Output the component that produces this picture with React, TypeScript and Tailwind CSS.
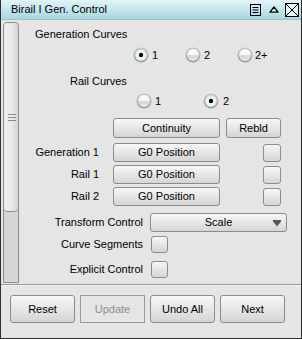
import React from 'react';

const font = { fontFamily: '"Liberation Sans", Arial, sans-serif' };

const Radio = ({ on }: { on?: boolean }) => (
    <svg width="16" height="16" viewBox="0 0 16 16" className="shrink-0">
        <defs>
            <linearGradient id="rRing" x1="0" y1="0" x2="0" y2="1">
                <stop offset="0" stopColor="#c4c4c4" />
                <stop offset="1" stopColor="#9a9a9a" />
            </linearGradient>
            <linearGradient id="rOff" x1="0" y1="0" x2="0" y2="1">
                <stop offset="0" stopColor="#ffffff" />
                <stop offset="0.5" stopColor="#f4f4f4" />
                <stop offset="0.55" stopColor="#d6d6d6" />
                <stop offset="1" stopColor="#e6e6e6" />
            </linearGradient>
            <radialGradient id="rOn" cx="0.5" cy="0.5" r="0.5">
                <stop offset="0" stopColor="#ffffff" />
                <stop offset="0.7" stopColor="#eef6f6" />
                <stop offset="1" stopColor="#c9dcdc" />
            </radialGradient>
        </defs>
        <circle cx="8" cy="8" r="7.5" fill="url(#rRing)" />
        <circle cx="8" cy="8" r="6" fill={on ? 'url(#rOn)' : 'url(#rOff)'} />
        {on && <circle cx="8" cy="8" r="2.2" fill="#000" />}
    </svg>
);

const Btn = ({ children, className = '' }: { children?: React.ReactNode; className?: string }) => (
    <div className={`flex items-center justify-center border border-[#8c8c8c] rounded-[3px] bg-gradient-to-b from-[#f7f7f7] to-[#d5d5d5] text-[11px] text-black leading-none ${className}`}>
        {children}
    </div>
);

const Check = () => <Btn className="w-[17px] h-[17px]" />;

const Row = ({ label, text }: { label: string; text: string }) => (
    <div className="flex items-center h-[19px]">
        <div className="w-[80px] text-right text-[11px]">{label}</div>
        <Btn className="ml-[14px] w-[107px] h-[19px]">{text}</Btn>
        <Btn className="ml-[43px] w-[18px] h-[18px]" />
    </div>
);

export default function App() {
    return (
        <div style={font} className="w-[302px] h-[339px] flex flex-col bg-[#e5e5e5] border-x border-b border-[#303030] text-black overflow-hidden">
            {/* title */}
            <div className="h-[20px] shrink-0 flex items-center bg-gradient-to-b from-[#e2f5f8] to-[#a8d7e1] border-b border-[#9cc4cc]">
                <span className="pl-[10px] text-[11px] flex-1">Birail I Gen. Control</span>
                <svg width="12" height="12" viewBox="0 0 12 12" className="mr-[7px]">
                    <rect x="0.5" y="0.5" width="10" height="11" fill="none" stroke="#000" />
                    <path d="M2.5 3.5h6M2.5 6h6M2.5 8.5h6" stroke="#000" />
                </svg>
                <svg width="10" height="7" viewBox="0 0 10 7" className="mr-[6px]">
                    <path d="M1 6.2 L5 1 L9 6.2 Z" fill="#fff" stroke="#000" strokeWidth="1.3" strokeLinejoin="round" />
                </svg>
                <svg width="14" height="14" viewBox="0 0 14 14" className="mr-[2px]">
                    <rect x="0.5" y="0.5" width="13" height="13" fill="#e8f4f6" stroke="#000" />
                    <path d="M1 1L13 13M13 1L1 13" stroke="#000" />
                </svg>
            </div>

            {/* main */}
            <div className="h-[264px] shrink-0 flex items-start">
                <div className="ml-[2px] mt-[2px] w-[16px] h-[261px] flex flex-col border border-[#8e8e8e] rounded-t-[4px] bg-[#d6d6d6]">
                    <div className="h-[189px] rounded-[4px] border-b border-[#8e8e8e] bg-gradient-to-r from-[#ececec] via-[#ececec] to-[#d4d4d4] flex flex-col items-center justify-center">
                        <div className="flex flex-col gap-[2px] ml-[2px]">
                            <div className="w-[8px] h-[1px] bg-[#8a8a8a]" />
                            <div className="w-[8px] h-[1px] bg-[#8a8a8a]" />
                            <div className="w-[8px] h-[1px] bg-[#8a8a8a]" />
                        </div>
                    </div>
                </div>

                <div className="flex-1 flex flex-col text-[11px]">
                    <div className="mt-[7px] h-[14px] leading-[14px] pl-[16px]">Generation Curves</div>
                    <div className="mt-[6px] pl-[114px] flex items-center h-[16px]">
                        <div className="w-[52px] flex items-center gap-[3px]"><Radio on /><span>1</span></div>
                        <div className="w-[52px] flex items-center gap-[3px]"><Radio /><span>2</span></div>
                        <div className="flex items-center gap-[2px]"><Radio /><span>2+</span></div>
                    </div>
                    <div className="mt-[11px] h-[14px] leading-[14px] pl-[51px]">Rail Curves</div>
                    <div className="mt-[5px] pl-[117px] flex items-center h-[16px]">
                        <div className="w-[67px] flex items-center gap-[3px]"><Radio /><span>1</span></div>
                        <div className="flex items-center gap-[4px]"><Radio on /><span>2</span></div>
                    </div>
                    <div className="mt-[9px] pl-[94px] flex items-center gap-[6px]">
                        <Btn className="w-[107px] h-[20px]">Continuity</Btn>
                        <Btn className="w-[55px] h-[20px]">Rebld</Btn>
                    </div>
                    <div className="mt-[5px] flex flex-col gap-[3px]">
                        <Row label="Generation 1" text="G0 Position" />
                        <Row label="Rail 1" text="G0 Position" />
                        <Row label="Rail 2" text="G0 Position" />
                    </div>
                    <div className="mt-[7px] flex items-center h-[19px]">
                        <div className="w-[124px] text-right">Transform Control</div>
                        <Btn className="ml-[7px] w-[137px] h-[19px] relative">
                            Scale
                            <svg width="8" height="7" viewBox="0 0 8 7" className="absolute right-[5px] top-[6px]">
                                <path d="M0 0H8V1.5L4 6.5L0 1.5Z" fill="#555" />
                            </svg>
                        </Btn>
                    </div>
                    <div className="mt-[4px] flex items-center h-[17px]">
                        <div className="w-[124px] text-right">Curve Segments</div>
                        <div className="ml-[8px]"><Check /></div>
                    </div>
                    <div className="mt-[8px] flex items-center h-[17px]">
                        <div className="w-[124px] text-right">Explicit Control</div>
                        <div className="ml-[8px]"><Check /></div>
                    </div>
                </div>
            </div>

            {/* separator */}
            <div className="h-[2px] shrink-0 border-t border-[#9a9a9a] bg-[#f4f4f4]" />

            {/* footer */}
            <div className="mt-[9px] ml-[9px] flex gap-[5px]">
                <Btn className="w-[65px] h-[28px]">Reset</Btn>
                <div className="w-[65px] h-[28px] flex items-center justify-center border border-[#9a9a9a] text-[11px] text-[#8e8e8e]">Update</div>
                <Btn className="w-[65px] h-[28px]">Undo All</Btn>
                <Btn className="w-[65px] h-[28px]">Next</Btn>
            </div>
        </div>
    );
}
